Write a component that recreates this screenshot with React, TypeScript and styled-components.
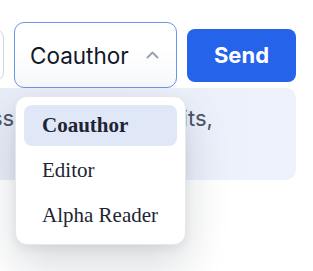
import React, { useState } from "react";
import styled, { createGlobalStyle } from "styled-components";

const GlobalStyle = createGlobalStyle`
  html, body { margin: 0; padding: 0; background: #ffffff; }
  body { min-height: 100vh; font-family: Inter, "Noto Sans", sans-serif; }
  * { box-sizing: border-box; }
`;

const DRAFT_WIDTH = 253;

const Page = styled.div`
  width: ${DRAFT_WIDTH + 292}px;
  margin-left: ${4 - DRAFT_WIDTH}px;
  padding-top: 22px;
`;

const Row = styled.div`
  display: flex;
  align-items: center;
  gap: 10px;
`;

const DraftInput = styled.div`
  flex: 0 0 ${DRAFT_WIDTH}px;
  height: 54px;
  border: 1px solid #d1d5db;
  border-radius: 10px;
  background: #ffffff;
`;

const SelectWrap = styled.div`
  position: relative;
  flex: 0 0 163px;
`;

const SelectButton = styled.button`
  width: 100%;
  height: 66px;
  display: flex;
  align-items: center;
  justify-content: space-between;
  padding: 0 17px 0 15px;
  border: 1px solid #6a95ec;
  border-radius: 10px;
  background: linear-gradient(#ffffff 40%, #f7f8fb);
  font-family: Inter, sans-serif;
  font-size: 22.5px;
  color: #111827;
  cursor: pointer;
`;

const Menu = styled.div`
  position: absolute;
  top: calc(100% + 8px);
  left: 1px;
  width: 171px;
  padding: 8px;
  display: flex;
  flex-direction: column;
  gap: 4px;
  background: #ffffff;
  border: 1px solid #e6e7eb;
  border-radius: 12px;
  box-shadow: 0 20px 44px rgba(15, 23, 42, 0.16), 0 4px 10px rgba(15, 23, 42, 0.06);
  z-index: 10;
`;

const MenuItem = styled.div<{ $active?: boolean }>`
  height: 41px;
  display: flex;
  align-items: center;
  padding: 0 18px;
  border-radius: 8px;
  font-family: "Liberation Serif", "DejaVu Serif", serif;
  font-size: 21px;
  font-weight: ${(p) => (p.$active ? 700 : 400)};
  color: #1e2433;
  background: ${(p) => (p.$active ? "#e0e8f8" : "transparent")};
`;

const SendButton = styled.button`
  flex: 0 0 109px;
  height: 53px;
  border: none;
  border-radius: 8px;
  background: #2563eb;
  color: #ffffff;
  font-family: Inter, sans-serif;
  font-weight: 700;
  font-size: 22px;
  cursor: pointer;
`;

const Panel = styled.div`
  border-radius: 10px;
  background: linear-gradient(90deg, #e2e7f2, #eef2fd);
  padding: 15px 16px 17px;
  font-family: Inter, sans-serif;
  font-size: 22px;
  line-height: 30px;
  color: #4b5563;
`;

const Chevron = () => (
  <svg width="13" height="8" viewBox="0 0 13 8" fill="none">
    <polyline points="1.5,6.5 6.5,1.5 11.5,6.5" stroke="#9ca3af" strokeWidth="2" strokeLinecap="round" strokeLinejoin="round" />
  </svg>
);

const roles = ["Coauthor", "Editor", "Alpha Reader"];

export default function App() {
  const [role] = useState("Coauthor");
  return (
    <>
      <GlobalStyle />
      <Page>
        <Row>
          <DraftInput />
          <SelectWrap>
            <SelectButton>
              <span>{role}</span>
              <Chevron />
            </SelectButton>
            <Menu>
              {roles.map((r) => (
                <MenuItem key={r} $active={r === role}>
                  {r}
                </MenuItem>
              ))}
            </Menu>
          </SelectWrap>
          <SendButton>Send</SendButton>
        </Row>
        <Panel>Ask an agent to discuss the scene or edits, suggestions.</Panel>
      </Page>
    </>
  );
}
